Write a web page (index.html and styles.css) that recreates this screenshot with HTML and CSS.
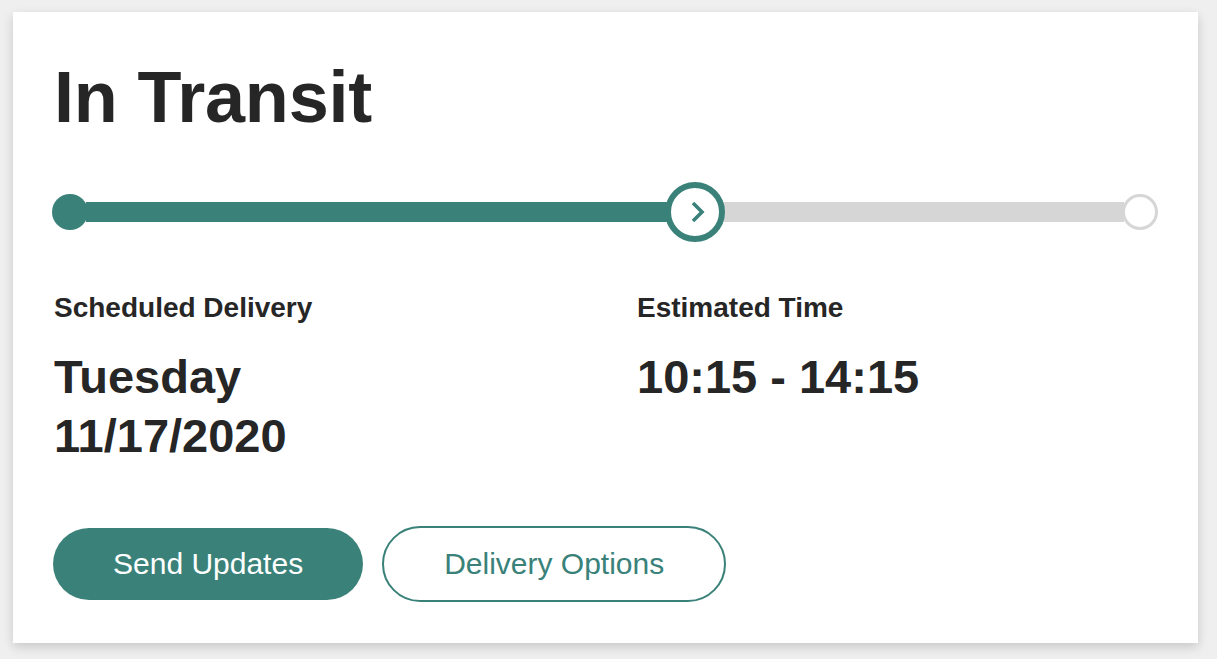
FILE: index.html
```html
<!DOCTYPE html>
<html lang="en">
<head>
<meta charset="utf-8">
<title>In Transit</title>
<link rel="stylesheet" href="styles.css">
</head>
<body>
  <div class="card">
    <h1 class="title">In Transit</h1>
    <div class="progress">
      <span class="dot dot-start"></span>
      <span class="seg seg-done"></span>
      <span class="dot dot-current">
        <svg viewBox="0 0 48 48" width="48" height="48" aria-hidden="true">
          <polyline points="22,15 31,24 22,33" fill="none" stroke="#3a8279" stroke-width="3.6" stroke-linejoin="miter" stroke-linecap="butt"/>
        </svg>
      </span>
      <span class="seg seg-todo"></span>
      <span class="dot dot-end"></span>
    </div>
    <div class="info">
      <div class="info-col">
        <div class="label">Scheduled Delivery</div>
        <div class="value">Tuesday<br>11/17/2020</div>
      </div>
      <div class="info-col">
        <div class="label">Estimated Time</div>
        <div class="value">10:15 - 14:15</div>
      </div>
    </div>
    <div class="actions">
      <button class="btn btn-primary" type="button">Send Updates</button>
      <button class="btn btn-outline" type="button">Delivery Options</button>
    </div>
  </div>
</body>
</html>
```
FILE: styles.css
```css
html, body {
  margin: 0;
  padding: 0;
}
body {
  background: #efefef;
  font-family: "Liberation Sans", Arial, Helvetica, sans-serif;
  color: #262626;
  padding: 12px 19px 17px 13px;
}
.card {
  width: 1185px;
  box-sizing: border-box;
  background: #ffffff;
  box-shadow: 0 4px 10px rgba(0, 0, 0, 0.16);
  padding: 49px 40px 41px 40px;
}
.title {
  margin: 0 0 0 1px;
  font-size: 72px;
  line-height: 72px;
  font-weight: 700;
  letter-spacing: -0.2px;
}
.progress {
  margin: 49px 0 0 -1px;
  height: 60px;
  display: flex;
  align-items: center;
}
.seg {
  height: 20px;
  display: block;
}
.seg-done {
  flex: 576 1 0;
  background: #3a8279;
  margin-left: -2px;
  margin-right: -2px;
}
.seg-todo {
  flex: 398 1 0;
  background: #d6d6d6;
  margin-left: -2px;
  margin-right: -2px;
}
.dot {
  display: block;
  border-radius: 50%;
  box-sizing: border-box;
  position: relative;
  z-index: 1;
  flex: none;
}
.dot-start {
  width: 36px;
  height: 36px;
  background: #3a8279;
}
.dot-current {
  width: 60px;
  height: 60px;
  border: 6px solid #3a8279;
  background: #ffffff;
}
.dot-current svg {
  display: block;
}
.dot-end {
  width: 36px;
  height: 36px;
  border: 3px solid #d6d6d6;
  background: #ffffff;
}
.info {
  margin-top: 50px;
  display: grid;
  grid-template-columns: 1fr 1fr;
  column-gap: 61px;
}
.label {
  font-size: 28px;
  line-height: 32px;
  font-weight: 700;
  padding-left: 1px;
}
.value {
  margin-top: 23px;
  font-size: 47px;
  line-height: 59px;
  font-weight: 700;
  padding-left: 1px;
}
.actions {
  margin-top: 61px;
  display: flex;
  align-items: center;
  gap: 19px;
}
.btn {
  font-family: "Liberation Sans", Arial, Helvetica, sans-serif;
  font-size: 30px;
  font-weight: 400;
  border-radius: 40px;
  padding: 0 60px;
  box-sizing: border-box;
  cursor: pointer;
  margin: 0;
}
.btn-primary {
  height: 72px;
  background: #3a8279;
  color: #ffffff;
  border: none;
}
.btn-outline {
  height: 76px;
  background: #ffffff;
  color: #3a8279;
  border: 2px solid #3a8279;
}
```
